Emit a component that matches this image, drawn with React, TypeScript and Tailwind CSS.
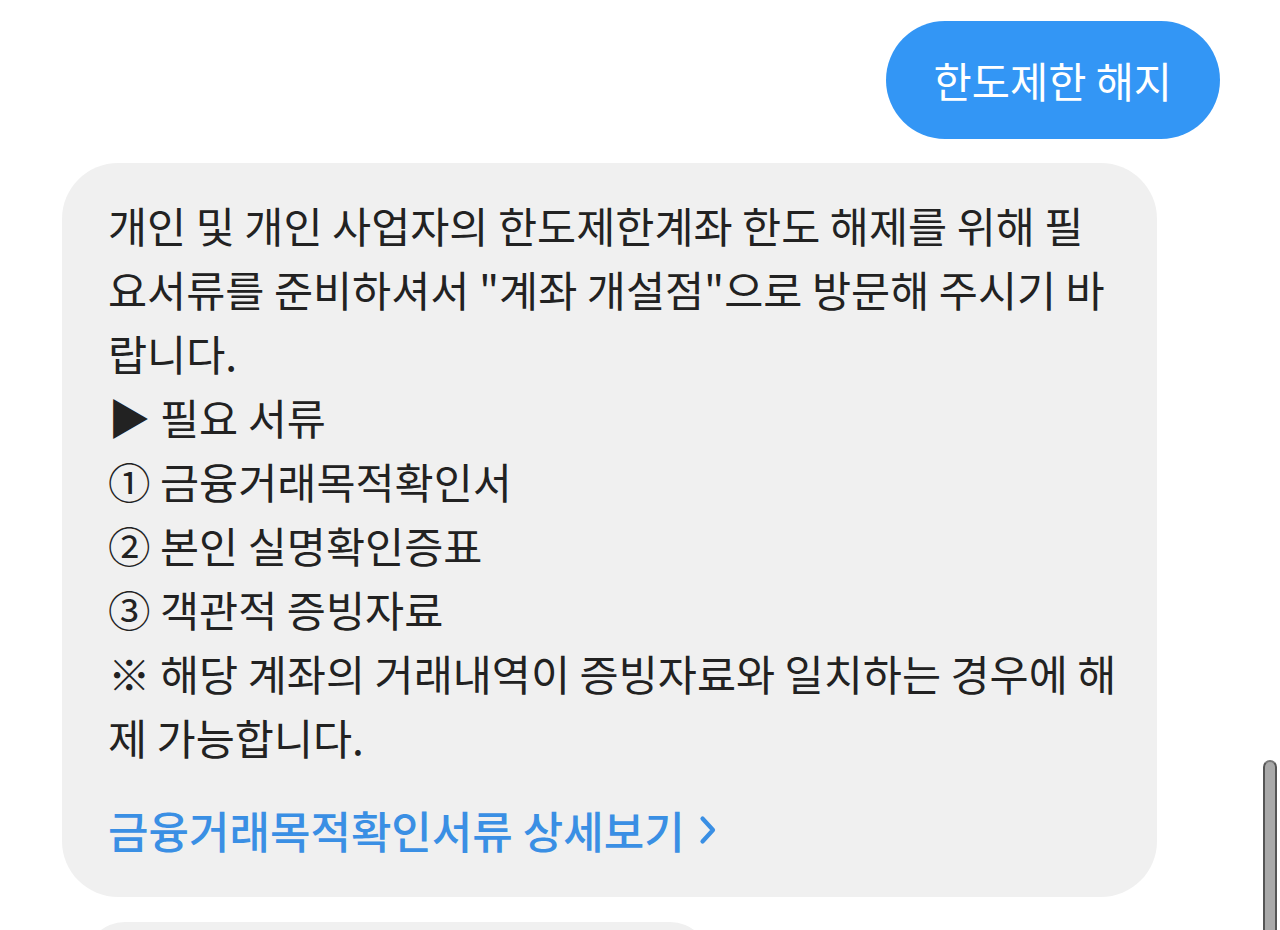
export default function App() {
  const lines = [
    '개인 및 개인 사업자의 한도제한계좌 한도 해제를 위해 필',
    '요서류를 준비하셔서 "계좌 개설점"으로 방문해 주시기 바',
    '랍니다.',
    '▶ 필요 서류',
    '① 금융거래목적확인서',
    '② 본인 실명확인증표',
    '③ 객관적 증빙자료',
    '※ 해당 계좌의 거래내역이 증빙자료와 일치하는 경우에 해',
    '제 가능합니다.',
  ];

  return (
    <div className="relative h-[930px] overflow-hidden bg-white font-['Noto_Sans_CJK_KR',sans-serif]">
      <div className="flex flex-col pt-[21px]">
        {/* sent message */}
        <div className="flex justify-end pr-[60px]">
          <div className="flex h-[118px] items-center rounded-full bg-[#3396f5] px-[48px] text-[41.5px] text-white">
            한도제한 해지
          </div>
        </div>

        {/* reply bubble */}
        <div className="ml-[62px] mt-[24px] w-[1095px] rounded-[56px] bg-[#f0f0f0] pb-[35px] pl-[46px] pr-[30px] pt-[30px]">
          <div className="whitespace-nowrap text-[42.5px] leading-[64px] text-[#222222]">
            {lines.map((l, i) => (
              <div key={i}>{l}</div>
            ))}
          </div>
          <div className="mt-[29px] flex items-center gap-[14px] text-[44px] font-medium leading-[64px] text-[#3a8fe4]">
            <span>금융거래목적확인서류 상세보기</span>
            <svg width="18" height="30" viewBox="0 0 18 30" fill="none">
              <path d="M3.5 3.5 L14 15 L3.5 26.5" stroke="#3a8fe4" strokeWidth="4.2" strokeLinecap="round" strokeLinejoin="round" />
            </svg>
          </div>
        </div>

        {/* next bubble, cut off */}
        <div className="ml-[85px] mt-[25px] h-[60px] w-[625px] rounded-t-[40px] bg-[#f0f0f0]" />
      </div>

      {/* scrollbar */}
      <div className="absolute right-[3px] top-[760px] h-[200px] w-[14px] rounded-t-full border-x-2 border-t-2 border-x-[#555555] border-t-[#777777] bg-[#a9a9a9]" />
    </div>
  );
}
